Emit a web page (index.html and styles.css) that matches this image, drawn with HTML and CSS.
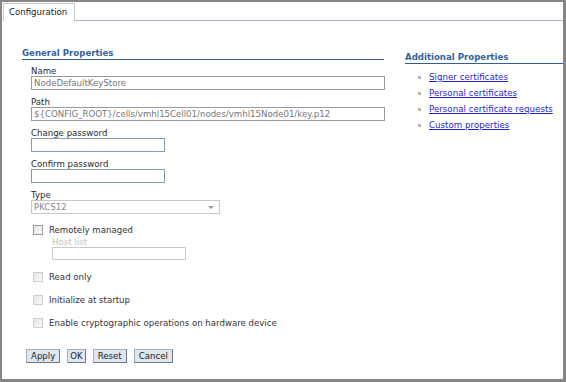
FILE: index.html
```html
<!DOCTYPE html>
<html lang="en">
  <head>
    <meta charset="UTF-8" />
    <title>Configuration</title>
    <link rel="stylesheet" href="styles.css">
  </head>
  <body>
    <div class="frame">
      <div class="tabs">
        <div class="tab">Configuration</div>
        <div class="tab-rest"></div>
      </div>

      <div class="main">
        <div class="general">
          <div class="section-title">General Properties</div>

          <div class="fields">
            <div class="field">
              <label class="field-label">Name</label>
              <input class="text-input wide" type="text" value="NodeDefaultKeyStore" readonly />
            </div>
            <div class="field">
              <label class="field-label">Path</label>
              <input class="text-input wide" type="text" value="${CONFIG_ROOT}/cells/vmhl15Cell01/nodes/vmhl15Node01/key.p12" readonly />
            </div>
            <div class="field">
              <label class="field-label">Change password</label>
              <input class="text-input short" type="password" />
            </div>
            <div class="field">
              <label class="field-label">Confirm password</label>
              <input class="text-input short" type="password" />
            </div>
            <div class="field">
              <label class="field-label">Type</label>
              <div class="select">
                <span>PKCS12</span>
                <span class="select-arrow"></span>
              </div>
            </div>
          </div>

          <div class="check-row remote">
            <span class="checkbox"></span>
            <span class="check-label">Remotely managed</span>
          </div>
          <div class="host">
            <div class="host-label">Host list</div>
            <input class="text-input host-input" type="text" disabled />
          </div>

          <div class="check-row faded first-faded">
            <span class="checkbox"></span>
            <span class="check-label">Read only</span>
          </div>
          <div class="check-row faded">
            <span class="checkbox"></span>
            <span class="check-label">Initialize at startup</span>
          </div>
          <div class="check-row faded">
            <span class="checkbox"></span>
            <span class="check-label">Enable cryptographic operations on hardware device</span>
          </div>

          <div class="buttons">
            <button class="btn">Apply</button>
            <button class="btn narrow">OK</button>
            <button class="btn">Reset</button>
            <button class="btn">Cancel</button>
          </div>
        </div>

        <div class="additional">
          <div class="section-title">Additional Properties</div>
          <ul class="links">
            <li><a href="#">Signer certificates</a></li>
            <li><a href="#">Personal certificates</a></li>
            <li><a href="#">Personal certificate requests</a></li>
            <li><a href="#">Custom properties</a></li>
          </ul>
        </div>
      </div>
    </div>
  </body>
</html>
```

FILE: styles.css
```css
body {
  margin: 0;
  font-family: "DejaVu Sans", Verdana, sans-serif;
  font-size: 8.6px;
  color: #333;
  background: white;
}

.frame {
  width: 566px;
  height: 382px;
  box-sizing: border-box;
  border: 2px solid #858585;
  border-right-width: 3px;
  border-bottom-width: 3px;
  padding: 1px 0 0 1px;
}

.tabs {
  display: flex;
  height: 18px;
}

.tab {
  padding: 0 6px 0 5px;
  line-height: 17px;
  border: 1px solid #c3cad6;
  border-bottom: none;
  color: #222;
  width: 59px;
}

.tab-rest {
  flex: 1;
  border-bottom: 1px solid #a9b5c9;
}

.main {
  display: flex;
  padding: 27px 0 0 19px;
}

.general {
  width: 362px;
}

.section-title {
  font-weight: bold;
  color: #33649b;
  border-bottom: 1px solid #2f5f95;
  line-height: 10px;
  padding-bottom: 1px;
}

.fields {
  display: flex;
  flex-direction: column;
  gap: 7px;
  padding: 6px 0 0 9px;
}

.field {
  display: flex;
  flex-direction: column;
}

.field-label {
  line-height: 10px;
  color: #2a2a2a;
}

.text-input {
  box-sizing: border-box;
  height: 14px;
  margin: 0;
  padding: 0 2px;
  border: 1px solid #9a9a9a;
  font-family: inherit;
  font-size: 8.6px;
  color: #777;
  background: white;
}

.wide {
  width: 354px;
}

.short {
  width: 134px;
  border-color: #7f9db9;
}

.select {
  box-sizing: border-box;
  width: 189px;
  height: 14px;
  border: 1px solid #c8c8c8;
  display: flex;
  align-items: center;
  justify-content: space-between;
  padding: 0 5px 0 2px;
  color: #8a8a8a;
}

.select-arrow {
  width: 0;
  height: 0;
  border-left: 3px solid transparent;
  border-right: 3px solid transparent;
  border-top: 3px solid #999;
}

.check-row {
  display: flex;
  align-items: center;
  gap: 6px;
  padding-left: 11px;
  margin-top: 13px;
}

.remote {
  margin-top: 11px;
}

.first-faded {
  margin-top: 12px;
}

.checkbox {
  width: 8px;
  height: 8px;
  border: 1px solid #9c9c9c;
  background: linear-gradient(135deg, #e4e4e4, #fafafa);
}

.faded .checkbox {
  border-color: #cfcfcf;
}

.host {
  padding: 2px 0 0 30px;
}

.host-label {
  color: #c4c4c4;
  line-height: 10px;
}

.host-input {
  width: 134px;
  height: 13px;
  border-color: #cacaca;
}

.buttons {
  display: flex;
  gap: 7px;
  margin: 21px 0 0 4px;
}

.btn {
  font-family: inherit;
  font-size: 8.6px;
  color: #222;
  height: 14px;
  padding: 0 4px;
  margin: 0;
  background: #dfe6ef;
  border: 1px solid #a5aebb;
  border-right-color: #6d7683;
  border-bottom-color: #6d7683;
}

.narrow {
  padding: 0 2px;
}

.additional {
  flex: 1;
  margin-left: 21px;
  padding-top: 4px;
}

.links {
  list-style: none;
  margin: 0;
  padding: 8px 0 0 13px;
  display: flex;
  flex-direction: column;
  gap: 5px;
}

.links li {
  display: flex;
  align-items: center;
  gap: 8px;
  line-height: 11px;
  font-size: 8.7px;
}

.links li::before {
  content: "";
  width: 3px;
  height: 3px;
  background: #b5b5b5;
}

.links a {
  color: #1f1fd0;
}
```
